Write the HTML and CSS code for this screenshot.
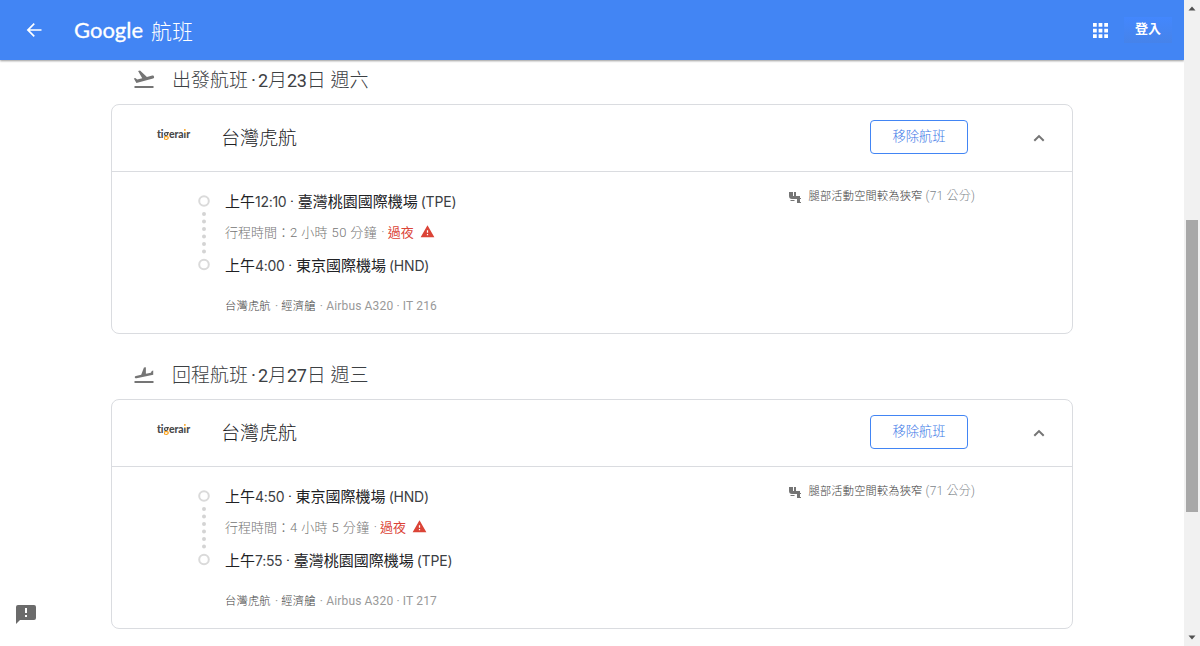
FILE: index.html
```html
<!DOCTYPE html>
<html lang="zh-TW">
<head>
    <meta charset="UTF-8">
    <title>Google 航班</title>
    <link rel="stylesheet" href="styles.css">
</head>
<body>

    <div class="page">
        <header class="topbar">
            <svg class="back" viewBox="0 0 24 24"><path d="M21 11H7l6-6-1.400-1.400L3.200 12l8.400 8.400L13 19l-6-6h14z"/></svg>
            <span class="brand">Google</span>
            <span class="product">航班</span>
            <svg class="apps" viewBox="0 0 16 16"><path d="M0 0h4v4H0zM6 0h4v4H6zM12 0h4v4h-4zM0 6h4v4H0zM6 6h4v4H6zM12 6h4v4h-4zM0 12h4v4H0zM6 12h4v4H6zM12 12h4v4h-4z"/></svg>
            <a class="login">登入</a>
        </header>

        <main>
            <section class="flight">
                <h2 class="title">
                    <svg class="plane" viewBox="0 0 24 24"><path d="M2.5 19h19v2h-19zM22.07 9.64c-.21-.8-1.04-1.28-1.84-1.06L14.92 10l-6.9-6.43-1.93.51 4.14 7.17-4.97 1.33-1.97-1.54-1.45.39 2.59 4.49L21 11.49c.81-.23 1.28-1.05 1.07-1.85z"/></svg>
                    <span class="title-text">出發航班<b>·</b><span class="num">2</span>月<span class="num">23</span>日 週六</span>
                </h2>
                <div class="card">
                    <div class="card-head">
                        <span class="logo">ti<span class="g">g</span>era<span class="i">i</span>r</span>
                        <span class="airline">台灣虎航</span>
                        <button class="remove">移除航班</button>
                        <svg class="chevron" viewBox="0 0 24 24"><path d="M12 8l-6.500 6.500 1.700 1.700L12 11.400l4.800 4.800 1.700-1.700z"/></svg>
                    </div>
                    <div class="card-body">
                        <svg class="track" viewBox="0 0 14 80"><g class="ring"><circle cx="7" cy="7" r="4.8"/><circle cx="7" cy="70.5" r="4.8"/></g><path class="dots" d="M7 20v38"/></svg>
                        <div class="legs">
                            <div class="stop">上午<span class="time">12:10</span> · 臺灣桃園國際機場<span class="code">(TPE)</span></div>
                            <div class="duration">行程時間：<span class="span">2 小時 50 分鐘</span> · <span class="overnight">過夜</span><svg class="warn" viewBox="0 0 24 24"><path d="M1 21h22L12 2 1 21zm12-3h-2v-2h2v2zm0-4h-2v-4h2v4z"/></svg></div>
                            <div class="stop">上午<span class="time">4:00</span> · 東京國際機場<span class="code">(HND)</span></div>
                            <div class="details"><em>台灣虎航</em> · <em>經濟艙</em> · Airbus A320 · IT 216</div>
                        </div>
                        <div class="legroom">
                            <svg class="seat" viewBox="0 0 12 12"><path d="M0 1h4v4h1V1h2v4h4v2h1v1h-1v3h1v1H8V8H3Q0 8 0 5z"/><path class="seat-line" d="M1.500 9.500h4"/></svg>
                            <span><em>腿部活動空間較為狹窄</em> (71 公分)</span>
                        </div>
                    </div>
                </div>
            </section>

            <section class="flight">
                <h2 class="title">
                    <svg class="plane" viewBox="0 0 24 24"><path d="M2.500 19h19v2h-19z"/><path transform="matrix(-1 0 0 .8 24 3.6)" d="M19.340 15.850c.8.210 1.620-.260 1.840-1.060.210-.8-.260-1.620-1.060-1.840l-5.310-1.420-2.760-9.020L10.120 2v8.280L5.150 8.950l-.930-2.320-1.450-.390v5.170l16.570 4.440z"/></svg>
                    <span class="title-text">回程航班<b>·</b><span class="num">2</span>月<span class="num">27</span>日 週三</span>
                </h2>
                <div class="card">
                    <div class="card-head">
                        <span class="logo">ti<span class="g">g</span>era<span class="i">i</span>r</span>
                        <span class="airline">台灣虎航</span>
                        <button class="remove">移除航班</button>
                        <svg class="chevron" viewBox="0 0 24 24"><path d="M12 8l-6.500 6.500 1.700 1.700L12 11.400l4.800 4.800 1.700-1.700z"/></svg>
                    </div>
                    <div class="card-body">
                        <svg class="track" viewBox="0 0 14 80"><g class="ring"><circle cx="7" cy="7" r="4.8"/><circle cx="7" cy="70.5" r="4.8"/></g><path class="dots" d="M7 20v38"/></svg>
                        <div class="legs">
                            <div class="stop">上午<span class="time">4:50</span> · 東京國際機場<span class="code">(HND)</span></div>
                            <div class="duration">行程時間：<span class="span">4 小時 5 分鐘</span> · <span class="overnight">過夜</span><svg class="warn" viewBox="0 0 24 24"><path d="M1 21h22L12 2 1 21zm12-3h-2v-2h2v2zm0-4h-2v-4h2v4z"/></svg></div>
                            <div class="stop">上午<span class="time">7:55</span> · 臺灣桃園國際機場<span class="code">(TPE)</span></div>
                            <div class="details"><em>台灣虎航</em> · <em>經濟艙</em> · Airbus A320 · IT 217</div>
                        </div>
                        <div class="legroom">
                            <svg class="seat" viewBox="0 0 12 12"><path d="M0 1h4v4h1V1h2v4h4v2h1v1h-1v3h1v1H8V8H3Q0 8 0 5z"/><path class="seat-line" d="M1.500 9.500h4"/></svg>
                            <span><em>腿部活動空間較為狹窄</em> (71 公分)</span>
                        </div>
                    </div>
                </div>
            </section>
        </main>
    </div>

    <div class="scrollbar">
        <svg class="arrow" viewBox="0 0 16 16"><path d="M4.500 10L8 6l3.500 4z"/></svg>
        <div class="thumb"></div>
        <svg class="arrow" viewBox="0 0 16 16"><path d="M4.500 6h7L8 10z"/></svg>
    </div>

    <svg class="feedback" viewBox="0 0 20 20"><path d="M2 1h16q2 0 2 2v11q0 2-2 2H4l-4 4V3q0-2 2-2z"/><path class="mark" d="M9 4h2v5H9zM9 11h2v2H9z"/></svg>

</body>
</html>
```
FILE: styles.css
```css
* {
    box-sizing: border-box;
}
body {
    margin: 0;
    height: 646px;
    display: flex;
    overflow: hidden;
    background: #fff;
    font-family: Roboto, "Noto Sans CJK TC", sans-serif;
    font-weight: 300;
    white-space: nowrap;
}
svg {
    display: block;
    flex: none;
}
em {
    font-style: normal;
    font-weight: 300;
    color: #404040;
}
.page {
    width: 1184px;
}
.topbar {
    display: flex;
    align-items: center;
    height: 60px;
    padding: 0 12px 0 24px;
    background: #4285f4;
    color: #fff;
    box-shadow: 0 1px 2px rgba(0,0,0,0.4);
}
.topbar svg {
    fill: #fff;
}
.back {
    width: 20px;
    height: 20px;
    margin-right: 30px;
}
.brand {
    width: 77px;
    padding-bottom: 2px;
    font-family: Lato, sans-serif;
    font-weight: 400;
    font-size: 22px;
    -webkit-text-stroke: 0.3px #fff;
}
.product {
    font-size: 21px;
}
.apps {
    width: 15px;
    height: 15px;
    margin-left: auto;
}
.login {
    width: 48px;
    margin-left: 16px;
    padding-bottom: 2px;
    text-align: center;
    line-height: 24px;
    font-size: 13px;
    font-weight: 700;
    background: linear-gradient(#4387fd, #4683ea);
}
main {
    width: 962px;
    margin: 0 auto 0 111px;
}
.flight {
    height: 295px;
}
.title {
    display: flex;
    align-items: center;
    height: 44px;
    margin: 0;
    padding: 0 0 6px 21px;
    font-size: 19px;
    font-weight: 300;
    color: #3c4043;
}
.title-text {
    padding-bottom: 2px;
}
.title-text b {
    margin: 0 2px 0 3px;
}
.num {
    font-weight: 400;
    font-size: 18px;
    letter-spacing: -0.2px;
}
.plane {
    width: 24px;
    height: 24px;
    margin-right: 16px;
    fill: #757575;
}
.card {
    height: 230px;
    border: 1px solid #dadce0;
    border-radius: 8px;
}
.card-head {
    display: flex;
    align-items: center;
    height: 67px;
    padding-left: 45px;
    border-bottom: 1px solid #dadce0;
}
.logo {
    width: 64px;
    padding-bottom: 9px;
    font-family: Lato, sans-serif;
    font-size: 10.5px;
    font-weight: 900;
    letter-spacing: -0.1px;
    color: #4a4a4a;
}
.g {
    background: linear-gradient(#4a4a4a 68%, #f9a11b 68%);
    -webkit-background-clip: text;
    color: transparent;
}
.i {
    background: linear-gradient(#f9a11b 38%, #4a4a4a 38%);
    -webkit-background-clip: text;
    color: transparent;
}
.airline {
    padding-bottom: 4px;
    font-size: 19px;
    color: #202124;
}
.remove {
    width: 98px;
    height: 34px;
    margin: 0 61px 2px auto;
    padding: 0 0 4px;
    border: 1px solid #4285f4;
    border-radius: 4px;
    background: #fff;
    color: #3b78e7;
    font: inherit;
    font-size: 13.300px;
}
.chevron {
    width: 20px;
    height: 20px;
    margin-right: 23px;
    fill: #757575;
}
.card-body {
    display: flex;
    padding: 17px 97px 0 85px;
}
.track {
    width: 14px;
    height: 80px;
    margin: 5px 14px 0 0;
}
.ring {
    fill: #fff;
    stroke: #dadada;
    stroke-width: 2;
}
.dots {
    fill: none;
    stroke: #d4d4d4;
    stroke-width: 4;
    stroke-linecap: round;
    stroke-dasharray: 0 7.500;
}
.stop {
    height: 26px;
    line-height: 26px;
    font-size: 15px;
    font-weight: 400;
    color: #202124;
}
.time, .code {
    font-family: Inter, sans-serif;
    font-size: 14px;
    letter-spacing: -0.2px;
    color: #3c4043;
}
.time {
    letter-spacing: -0.3px;
}
.code {
    margin-left: 3px;
}
.duration {
    display: flex;
    align-items: center;
    height: 38px;
    padding-bottom: 6px;
    font-size: 13px;
    color: #757575;
    white-space: pre;
}
.span {
    letter-spacing: 0.4px;
    margin-right: 1px;
}
.overnight {
    color: #db4437;
    font-weight: 400;
}
.warn {
    width: 15px;
    height: 15px;
    margin-left: 6px;
    fill: #db4437;
}
.details {
    margin-top: 17px;
    line-height: 20px;
    font-size: 12px;
    font-weight: 400;
    letter-spacing: 0.15px;
    color: #999;
}
.details em {
    margin-right: 1px;
    font-size: 11.300px;
}
.legroom {
    display: flex;
    align-items: center;
    height: 12px;
    margin-left: auto;
    padding-bottom: 2px;
    font-size: 12px;
    letter-spacing: 0.2px;
    color: #80868b;
}
.legroom em {
    font-size: 11.200px;
}
.seat {
    width: 12px;
    height: 12px;
    margin: 5px 8px 0 0;
    fill: #757575;
}
.seat-line {
    stroke: #757575;
}
.scrollbar {
    display: flex;
    flex-direction: column;
    width: 16px;
    background: #f1f1f1;
}
.arrow {
    width: 16px;
    height: 17px;
    fill: #505050;
}
.thumb {
    width: 12px;
    height: 292px;
    margin: 203px 2px auto;
    background: #a8a8a8;
}
.feedback {
    position: absolute;
    left: 16px;
    top: 604px;
    width: 20px;
    height: 20px;
    fill: #6b6b6b;
}
.mark {
    fill: #fff;
}
```
